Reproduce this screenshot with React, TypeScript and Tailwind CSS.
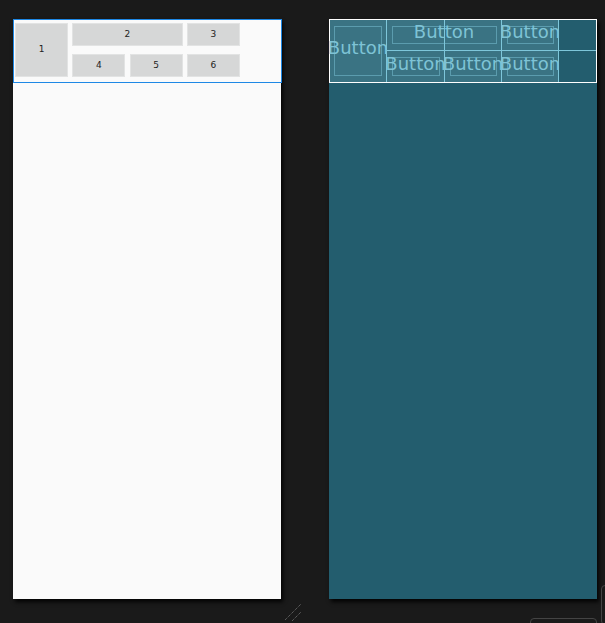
import React from 'react';

const cell = 'relative flex items-center justify-center overflow-visible whitespace-nowrap';

const DesignButton: React.FC<{ label: string; className?: string }> = ({ label, className = '' }) => (
  <div className={`bg-[#d6d7d7] border border-[#e2e3e3] flex items-center justify-center text-[9px] text-[#222] ${className}`}>
    {label}
  </div>
);

const BlueprintCell: React.FC<{ className?: string; inner: string; text: string; children?: React.ReactNode }> = ({ className = '', inner, text, children }) => (
  <div className={`${cell} bg-[#3a7383] ${className}`}>
    <div className={`absolute border border-[#6aaec0]/70 ${inner}`} />
    {children}
    <span className="relative -translate-y-[3px] text-[18px] leading-none text-[#7ec3d6]">{text}</span>
  </div>
);

export default function App() {
  return (
    <div className="relative w-[605px] h-[623px] bg-[#1a1a1a] overflow-hidden" style={{ fontFamily: '"DejaVu Sans", "Liberation Sans", sans-serif' }}>
      <div className="flex gap-[48px] pl-[13px] pt-[19px]">
        {/* Design view */}
        <div className="w-[268px] h-[580px] bg-[#fafafa] shadow-[2px_3px_4px_rgba(0,0,0,0.9)]">
          <div className="h-[64px] w-[269px] border border-[#1e88e5] pl-[1px] pt-[3px]">
            <div className="grid grid-cols-[53px_53px_53px_53px] grid-rows-[23px_23px] gap-x-[4.3px] gap-y-[8px]">
              <DesignButton label="1" className="row-span-2" />
              <DesignButton label="2" className="col-span-2" />
              <DesignButton label="3" />
              <DesignButton label="4" />
              <DesignButton label="5" />
              <DesignButton label="6" />
            </div>
          </div>
        </div>

        {/* Blueprint view */}
        <div className="w-[268px] h-[580px] bg-[#235d6e] shadow-[2px_3px_4px_rgba(0,0,0,0.9)]">
          <div className="h-[64px] border border-white grid grid-cols-[57px_58px_57px_57px_1fr] grid-rows-[31px_31px]">
            <BlueprintCell text="Button" className="row-span-2 border-r border-[#7ec6da]" inner="left-[4px] right-[4px] top-[6px] bottom-[6px]" />
            <BlueprintCell text="Button" className="col-span-2 border-r border-b border-[#7ec6da]" inner="left-[5px] right-[4px] top-[6px] bottom-[6px]">
              <div className="absolute left-[57px] top-0 bottom-0 w-px bg-[#7ec6da]" />
            </BlueprintCell>
            <BlueprintCell text="Button" className="border-r border-b border-[#7ec6da]" inner="left-[5px] right-[4px] top-[6px] bottom-[6px]" />
            <div className="border-b border-[#7ec6da]" />
            <BlueprintCell text="Button" className="border-r border-[#7ec6da]" inner="left-[5px] right-[4px] top-[6px] bottom-[6px]" />
            <BlueprintCell text="Button" className="border-r border-[#7ec6da]" inner="left-[5px] right-[4px] top-[6px] bottom-[6px]" />
            <BlueprintCell text="Button" className="border-r border-[#7ec6da]" inner="left-[5px] right-[4px] top-[6px] bottom-[6px]" />
            <div />
          </div>
        </div>
      </div>

      {/* resize handle */}
      <svg className="absolute left-[284px] top-[602px]" width="20" height="20" viewBox="0 0 20 20">
        <line x1="1" y1="18" x2="17" y2="2" stroke="#777" strokeWidth="1" strokeDasharray="1 1" />
        <line x1="8" y1="19" x2="17" y2="10" stroke="#777" strokeWidth="1" strokeDasharray="1 1" />
      </svg>

      {/* bottom right chrome */}
      <div className="absolute left-[530px] top-[618px] w-[67px] h-[20px] rounded-[4px] border border-[#444]" />
      <div className="absolute left-[601px] top-[585px] w-[8px] h-[40px] rounded-[4px] border border-[#444]" />
    </div>
  );
}
